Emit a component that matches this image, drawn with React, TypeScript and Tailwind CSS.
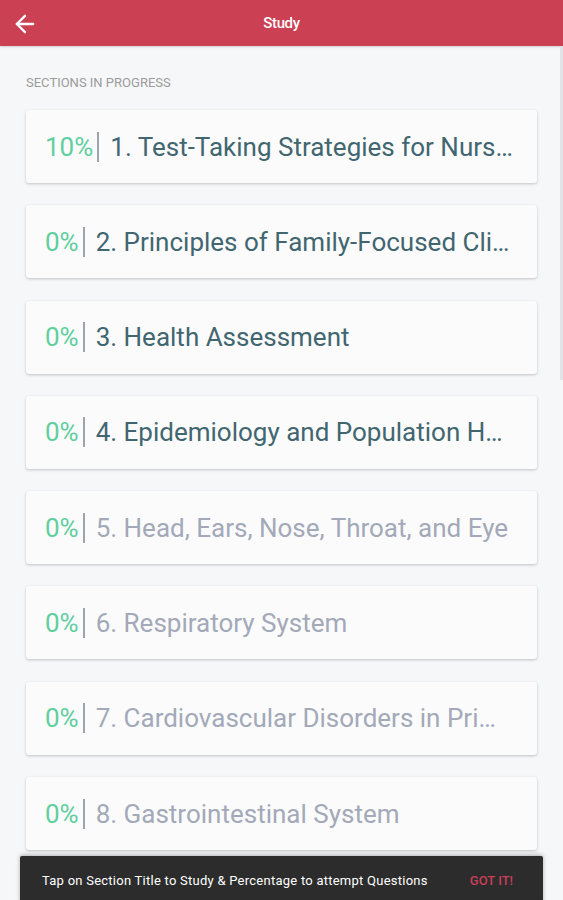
import { ArrowLeft } from "lucide-react";

interface Section {
  pct: string;
  title: string;
  active: boolean;
}

const sections: Section[] = [
  { pct: "10%", title: "1. Test-Taking Strategies for Nursing Students", active: true },
  { pct: "0%", title: "2. Principles of Family-Focused Clinical Care", active: true },
  { pct: "0%", title: "3. Health Assessment", active: true },
  { pct: "0%", title: "4. Epidemiology and Population Health", active: true },
  { pct: "0%", title: "5. Head, Ears, Nose, Throat, and Eye", active: false },
  { pct: "0%", title: "6. Respiratory System", active: false },
  { pct: "0%", title: "7. Cardiovascular Disorders in Primary Care", active: false },
  { pct: "0%", title: "8. Gastrointestinal System", active: false },
];

const SectionCard = ({ section }: { section: Section }) => {
  return (
    <div className="flex h-[73px] shrink-0 items-center rounded-[3px] bg-[#fbfbfc] pl-[19px] pr-[22px] shadow-[0_1px_3px_rgba(0,0,0,0.22)]">
      <span className="shrink-0 text-[26px] leading-none text-[#5fcf9e]">{section.pct}</span>
      <span className="ml-[4px] mr-[11px] h-[30px] w-[2px] shrink-0 bg-[#9ea4ae]" />
      <span
        className={
          "truncate text-[26px] leading-[32px] " +
          (section.active ? "text-[#416670]" : "text-[#a3a9b8]")
        }
      >
        {section.title}
      </span>
    </div>
  );
};

export default function App() {
  return (
    <div className="relative h-[900px] w-[563px] overflow-hidden bg-[#f6f7f9] font-['Roboto',sans-serif]">
      <header className="relative flex h-[46px] items-center justify-center bg-[#cb4053] shadow-[0_1px_2px_rgba(0,0,0,0.15)]">
        <ArrowLeft className="absolute left-[11px] top-[10px] text-white" size={28} strokeWidth={2} />
        <span className="text-[15px] font-medium tracking-tight text-white">Study</span>
      </header>

      <div className="flex flex-col px-[26px] pt-[29px]">
        <div className="mb-[19px] text-[13px] leading-[16px] text-[#9b9b9b]">SECTIONS IN PROGRESS</div>
        <div className="flex flex-col gap-[22.3px]">
          {sections.map((s) => (
            <SectionCard key={s.title} section={s} />
          ))}
        </div>
      </div>

      {/* scrollbar */}
      <div className="absolute right-0 top-[47px] h-[333px] w-[3px] bg-[#e2e3e6]" />

      {/* snackbar */}
      <div className="absolute left-[20px] top-[856px] flex h-[48px] w-[523px] items-start justify-between rounded-t-[2px] bg-[#2c2c2c] pl-[22px] pr-[30px] pt-[15px] shadow-[0_-1px_4px_rgba(0,0,0,0.3)]">
        <span className="text-[13px] tracking-[0.25px] text-white">
          Tap on Section Title to Study &amp; Percentage to attempt Questions
        </span>
        <span className="text-[13px] font-medium text-[#c73f58]">GOT IT!</span>
      </div>
    </div>
  );
}
